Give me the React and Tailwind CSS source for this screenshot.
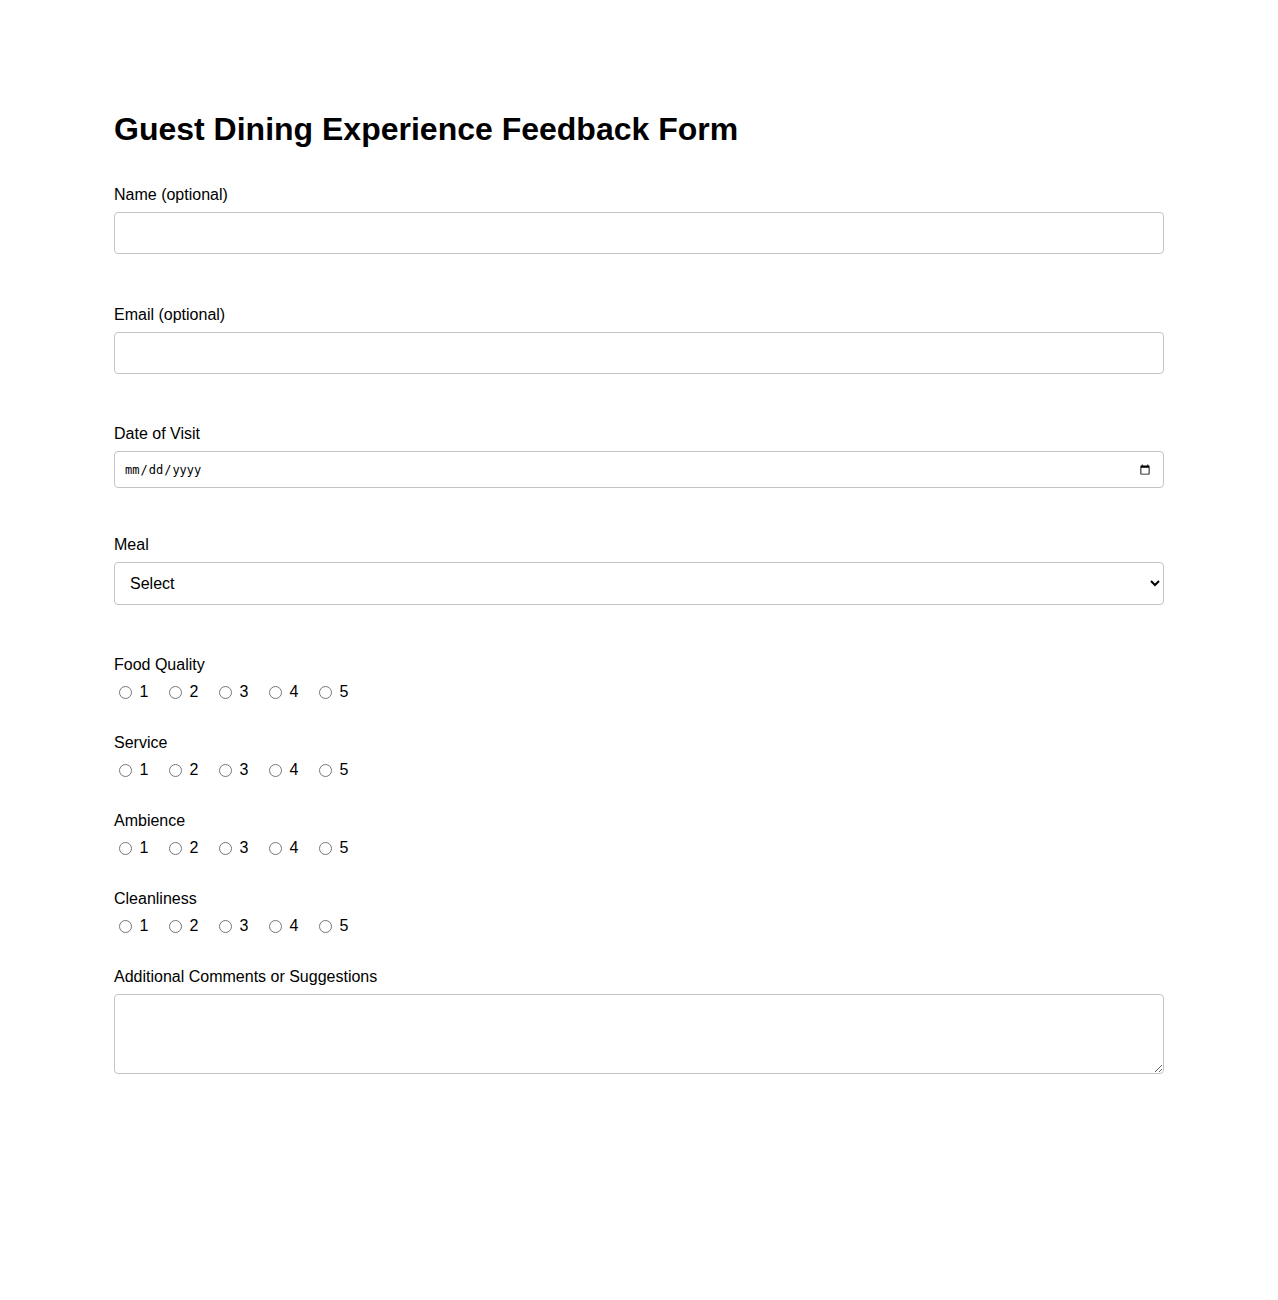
import React from 'react';

const ratings = ['Food Quality', 'Service', 'Ambience', 'Cleanliness'];

function RatingGroup({ label, name }) {
    return (
        <div className="mb-[32px]">
            <div className="leading-[18px] pt-[1px] mb-[9px]">{label}</div>
            <div className="flex items-center gap-[15.6px] h-[18px]">
                {[1, 2, 3, 4, 5].map((n) => (
                    <label key={n} className="flex items-center leading-[18px]">
                        <input type="radio" name={name} value={n} className="ml-[5px] mr-[3px] my-0 w-[13px] h-[13px]" />
                        <span className="ml-[4.5px]">{n}</span>
                    </label>
                ))}
            </div>
        </div>
    );
}

export default function App() {
    return (
        <div className="min-h-screen bg-white text-black font-['Liberation_Sans',Arial,sans-serif] text-[16px]">
            <div className="w-[1050px] mx-auto pt-[111px] pb-20">
                <h1 className="text-[32px] font-bold leading-[37px] mb-[37px]">Guest Dining Experience Feedback Form</h1>

                <form>
                    {/* Name */}
                    <div className="mb-[51px]">
                        <label className="block leading-[18px] pt-[1px] mb-[8px]">Name (optional)</label>
                        <input type="text" className="block w-full h-[42px] px-[10px] border border-[#c4c4c4] rounded-[4px]" />
                    </div>

                    {/* Email */}
                    <div className="mb-[50px]">
                        <label className="block leading-[18px] pt-[1px] mb-[8px]">Email (optional)</label>
                        <input type="email" className="block w-full h-[42px] px-[10px] border border-[#c4c4c4] rounded-[4px]" />
                    </div>

                    {/* Date */}
                    <div className="mb-[47px]">
                        <label className="block leading-[18px] pt-[1px] mb-[8px]">Date of Visit</label>
                        <input type="date" className="block w-full h-[37px] pl-[9px] pr-[10px] border border-[#c4c4c4] rounded-[4px] text-[12px] font-['DejaVu_Sans_Mono',monospace]" />
                    </div>

                    {/* Meal */}
                    <div className="mb-[50px]">
                        <label className="block leading-[18px] pt-[1px] mb-[8px]">Meal</label>
                        <select className="block w-full h-[43px] pl-[11px] pr-[10px] border border-[#c4c4c4] rounded-[4px] bg-white">
                            <option>Select</option>
                            <option>Breakfast</option>
                            <option>Lunch</option>
                            <option>Dinner</option>
                        </select>
                    </div>

                    {ratings.map((r) => (
                        <RatingGroup key={r} label={r} name={r.toLowerCase().replace(' ', '-')} />
                    ))}

                    {/* Comments */}
                    <div>
                        <label className="block leading-[18px] pt-[1px] mb-[8px]">Additional Comments or Suggestions</label>
                        <textarea className="block w-full h-[80px] p-[10px] border border-[#c4c4c4] rounded-[4px]" />
                    </div>
                </form>
            </div>
        </div>
    );
}
